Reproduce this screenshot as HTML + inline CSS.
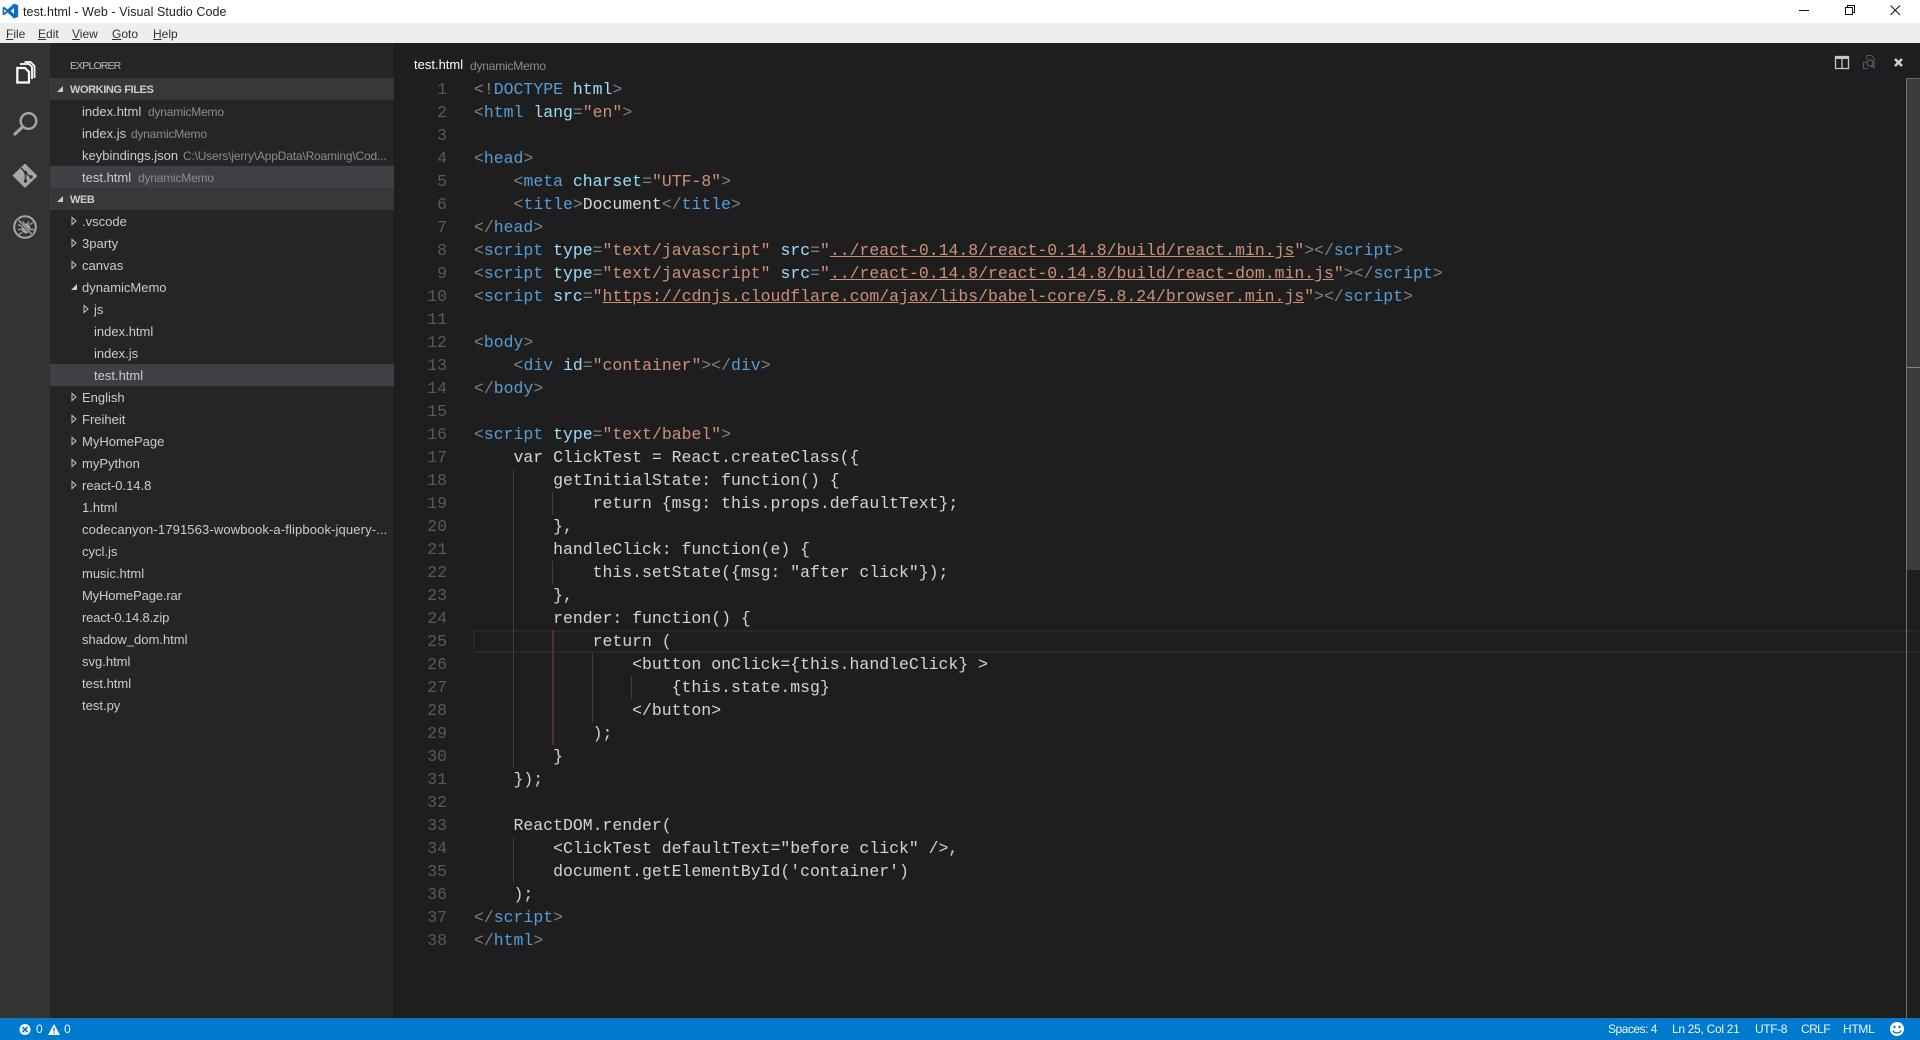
<!DOCTYPE html>
<html lang="en"><head><meta charset="utf-8"><title>test.html - Web - Visual Studio Code</title>
<style>
html,body{margin:0;padding:0;width:1920px;height:1040px;overflow:hidden;background:#1e1e1e;font-family:"Liberation Sans",sans-serif}
div,span,svg{box-sizing:border-box}
.a{position:absolute}
#title{left:0;top:0;width:1920px;height:23px;background:#fff}
#title .t{left:23px;top:1px;line-height:23px;font-size:12.5px;letter-spacing:.07px;color:#222;white-space:pre}
#menu{left:0;top:23px;width:1920px;height:20px;background:#eee;font-size:12px;color:#333;line-height:20px}
#menu span{position:absolute;top:1px}
#menu u{text-decoration:underline}
#act{left:0;top:43px;width:50px;height:975px;background:#333}
#side{left:50px;top:43px;width:344px;height:975px;background:#252526;color:#ccc;font-size:13px}
.r{position:absolute;left:50px;width:344px;height:22px;line-height:22px;font-size:13px;color:#ccc;white-space:pre}
.r span.n{position:absolute;top:1px}
.r span.d{position:absolute;top:1px;font-size:12px;letter-spacing:-.2px;color:#8c8c8c}
.h{background:#383838;font-weight:bold;font-size:11px;color:#ccc;letter-spacing:-.4px}
.s{background:#3f3f46}
.r svg{position:absolute;top:0;left:0}
#code{left:0;top:78px;width:1900px;font-family:"Liberation Mono",monospace;font-size:16.48px;line-height:23px;color:#d4d4d4}
.l{position:absolute;left:474px;height:23px;white-space:pre}
.g{position:absolute;width:1px;background:#404040}
.ln{position:absolute;left:400px;width:47px;text-align:right;color:#5a5a5a;height:23px;font-family:"Liberation Mono",monospace;font-size:16.5px;line-height:23px}
i{font-style:normal}
.p{color:#808080}.k{color:#569cd6}.b{color:#9cdcfe}.v{color:#ce9178}.u{color:#ce9178;text-decoration:underline}
#status{left:0;top:1018px;width:1920px;height:22px;background:#007acc;color:#fff;font-size:12px;line-height:22px}
#status span{position:absolute;top:0;white-space:pre;color:#eef6fb}
</style></head><body>
<div class="a" id="title">
<svg class="a" style="left:2px;top:3px" width="17" height="16" viewBox="0 0 17 16"><path fill="#0f6fbf" d="M12 0.5 5.6 6.4 2.2 3.7 0.6 4.5v7l1.6.8 3.4-2.7 6.4 5.9 4.2-1.8V2.3zM2.4 6l2 2-2 2zM12 5l-3.2 3 3.2 3z" fill-rule="evenodd"/></svg>
<div class="a t">test.html - Web - Visual Studio Code</div>
<svg class="a" style="left:1790px;top:0" width="130" height="23" viewBox="0 0 130 23" fill="none" stroke="#111" stroke-width="1"><path d="M9 10.5h10"/><path d="M55.500 7.500h7v7h-7zM57.500 7.500v-2.000h7v7h-2"/><path d="M100.500 5.500l9.500 9.500M110 5.500l-9.500 9.500"/></svg>
</div>
<div class="a" id="menu">
<span style="left:6px"><u>F</u>ile</span><span style="left:38px"><u>E</u>dit</span><span style="left:72px"><u>V</u>iew</span><span style="left:112px"><u>G</u>oto</span><span style="left:153px"><u>H</u>elp</span>
</div>
<div class="a" id="act">
<svg class="a" style="left:0;top:0" width="50" height="200" viewBox="0 0 50 200" fill="none">
<path d="M17.300 25h7.700l4 4v10.500H17.300z" stroke="#fff" stroke-width="2.200"/>
<path d="M21 22v-1h8l3 3v12" stroke="#fff" stroke-width="1.800"/>
<path d="M24.500 19h6l4 4v12" stroke="#fff" stroke-width="1.800"/>
<circle cx="28.500" cy="78" r="7.800" stroke="#a6a6a6" stroke-width="2.400"/>
<path d="M22.500 84l-7.500 7" stroke="#a6a6a6" stroke-width="3.200" stroke-linecap="round"/>
<path d="M25 121.500 36.500 133 25 144 13.500 132.500z" fill="#a6a6a6" stroke="#a6a6a6" stroke-linejoin="round" stroke-width="1.500"/>
<path d="M21 125l4.500 4.500v9M25.500 129.500l5 4.500" stroke="#333" stroke-width="1.500"/><circle cx="25.500" cy="129.500" r="1.700" fill="#333"/><circle cx="25.500" cy="138" r="1.700" fill="#333"/><circle cx="31" cy="134" r="1.700" fill="#333"/>
<circle cx="25" cy="184" r="10.800" stroke="#a6a6a6" stroke-width="2"/>
<ellipse cx="26" cy="185.500" rx="4.500" ry="5" fill="#a6a6a6"/><path d="M18 181.500l4 2M18 186.500h4M19 191.500l3-2M30 181.500l3-2M30 186.500h4M30 189.500l3 2M23 178.500l1.500 3M29 178.500l-1.500 3" stroke="#a6a6a6" stroke-width="1.300"/>
<path d="M17.500 176.500l15 15.500" stroke="#333" stroke-width="2.600"/>
<path d="M18 176.500l14.500 15.500" stroke="#a6a6a6" stroke-width="1.300"/>
</svg>
</div>
<div class="a" id="side"></div>
<div class="a" style="left:70px;top:55px;line-height:22px;font-size:10.5px;letter-spacing:-.85px;color:#bbb">EXPLORER</div>

<div class="r h" style="top:78px"><svg width="30" height="22"><path d="M7 14h6V8z" fill="#ccc"/></svg><span class="n" style="left:20px">WORKING FILES</span></div>
<div class="r" style="top:100px"><span class="n" style="left:32px">index.html</span><span class="d" style="left:98px">dynamicMemo</span></div>
<div class="r" style="top:122px"><span class="n" style="left:32px">index.js</span><span class="d" style="left:81px">dynamicMemo</span></div>
<div class="r" style="top:144px"><span class="n" style="left:32px">keybindings.json</span><span class="d" style="left:133px;letter-spacing:-.18px">C:\Users\jerry\AppData\Roaming\Cod...</span></div>
<div class="r s" style="top:166px"><span class="n" style="left:32px">test.html</span><span class="d" style="left:88px">dynamicMemo</span></div>
<div class="r h" style="top:188px"><svg width="30" height="22"><path d="M7 14h6V8z" fill="#ccc"/></svg><span class="n" style="left:20px">WEB</span></div>

<div class="r" style="top:210px"><svg width="60" height="22"><path d="M22 7.500v7l4-3.500z" fill="none" stroke="#c5c5c5"/></svg><span class="n" style="left:32px">.vscode</span></div>
<div class="r" style="top:232px"><svg width="60" height="22"><path d="M22 7.500v7l4-3.500z" fill="none" stroke="#c5c5c5"/></svg><span class="n" style="left:32px">3party</span></div>
<div class="r" style="top:254px"><svg width="60" height="22"><path d="M22 7.500v7l4-3.500z" fill="none" stroke="#c5c5c5"/></svg><span class="n" style="left:32px">canvas</span></div>
<div class="r" style="top:276px"><svg width="60" height="22"><path d="M21 14h6V8z" fill="#ccc"/></svg><span class="n" style="left:32px">dynamicMemo</span></div>
<div class="r" style="top:298px"><svg width="60" height="22"><path d="M34 7.500v7l4-3.500z" fill="none" stroke="#c5c5c5"/></svg><span class="n" style="left:44px">js</span></div>
<div class="r" style="top:320px"><span class="n" style="left:44px">index.html</span></div>
<div class="r" style="top:342px"><span class="n" style="left:44px">index.js</span></div>
<div class="r s" style="top:364px"><span class="n" style="left:44px">test.html</span></div>
<div class="r" style="top:386px"><svg width="60" height="22"><path d="M22 7.500v7l4-3.500z" fill="none" stroke="#c5c5c5"/></svg><span class="n" style="left:32px">English</span></div>
<div class="r" style="top:408px"><svg width="60" height="22"><path d="M22 7.500v7l4-3.500z" fill="none" stroke="#c5c5c5"/></svg><span class="n" style="left:32px">Freiheit</span></div>
<div class="r" style="top:430px"><svg width="60" height="22"><path d="M22 7.500v7l4-3.500z" fill="none" stroke="#c5c5c5"/></svg><span class="n" style="left:32px">MyHomePage</span></div>
<div class="r" style="top:452px"><svg width="60" height="22"><path d="M22 7.500v7l4-3.500z" fill="none" stroke="#c5c5c5"/></svg><span class="n" style="left:32px">myPython</span></div>
<div class="r" style="top:474px"><svg width="60" height="22"><path d="M22 7.500v7l4-3.500z" fill="none" stroke="#c5c5c5"/></svg><span class="n" style="left:32px">react-0.14.8</span></div>
<div class="r" style="top:496px"><span class="n" style="left:32px">1.html</span></div>
<div class="r" style="top:518px"><span class="n" style="left:32px;letter-spacing:.13px">codecanyon-1791563-wowbook-a-flipbook-jquery-...</span></div>
<div class="r" style="top:540px"><span class="n" style="left:32px">cycl.js</span></div>
<div class="r" style="top:562px"><span class="n" style="left:32px">music.html</span></div>
<div class="r" style="top:584px"><span class="n" style="left:32px;letter-spacing:-.15px">MyHomePage.rar</span></div>
<div class="r" style="top:606px"><span class="n" style="left:32px;letter-spacing:-.15px">react-0.14.8.zip</span></div>
<div class="r" style="top:628px"><span class="n" style="left:32px">shadow_dom.html</span></div>
<div class="r" style="top:650px"><span class="n" style="left:32px">svg.html</span></div>
<div class="r" style="top:672px"><span class="n" style="left:32px">test.html</span></div>
<div class="r" style="top:694px"><span class="n" style="left:32px">test.py</span></div>

<div class="a" style="left:414px;top:54px;line-height:22px;font-size:13px;color:#fff;white-space:pre">test.html</div>
<div class="a" style="left:470px;top:55px;line-height:22px;font-size:12px;letter-spacing:-.2px;color:#8c8c8c;white-space:pre">dynamicMemo</div>
<svg class="a" style="left:1830px;top:50px" width="85" height="25" viewBox="0 0 85 25" fill="none">
<path d="M5.500 6.500h13v12h-13zM12 6.500v12" stroke="#c5c5c5" stroke-width="1.300"/><path d="M5 6h14v3H5z" fill="#c5c5c5"/>
<path d="M36.500 9.500v-4h5l2.500 2.500v9h-3M38 18.500h-4.500v-6h3" stroke="#5a5a5a"/><circle cx="40" cy="13" r="3" stroke="#2f5a80" stroke-width="1.400"/><path d="M42 15.500l3 3" stroke="#2f5a80" stroke-width="1.500"/>
<path d="M65 9l7 7M72 9l-7 7" stroke="#d0d0d0" stroke-width="2.600"/>
</svg>

<!-- cursor line -->
<div class="a" style="left:473px;top:630px;width:1445px;height:23px;border:2px solid #282828;border-right:none"></div>

<!-- indent guides -->
<div class="g" style="left:513px;top:469px;height:299px"></div>
<div class="g" style="left:552px;top:492px;height:23px"></div>
<div class="g" style="left:552px;top:561px;height:23px"></div>
<div class="g" style="left:552px;top:630px;height:115px;background:#5a2e2e;width:2px"></div>
<div class="g" style="left:592px;top:653px;height:69px"></div>
<div class="g" style="left:631px;top:676px;height:23px"></div>
<div class="g" style="left:513px;top:837px;height:46px"></div>

<div class="a" id="code" style="height:880px">
<div class="ln" style="top:0">1</div><div class="ln" style="top:23px">2</div><div class="ln" style="top:46px">3</div><div class="ln" style="top:69px">4</div><div class="ln" style="top:92px">5</div><div class="ln" style="top:115px">6</div><div class="ln" style="top:138px">7</div><div class="ln" style="top:161px">8</div><div class="ln" style="top:184px">9</div><div class="ln" style="top:207px">10</div><div class="ln" style="top:230px">11</div><div class="ln" style="top:253px">12</div><div class="ln" style="top:276px">13</div><div class="ln" style="top:299px">14</div><div class="ln" style="top:322px">15</div><div class="ln" style="top:345px">16</div><div class="ln" style="top:368px">17</div><div class="ln" style="top:391px">18</div><div class="ln" style="top:414px">19</div><div class="ln" style="top:437px">20</div><div class="ln" style="top:460px">21</div><div class="ln" style="top:483px">22</div><div class="ln" style="top:506px">23</div><div class="ln" style="top:529px">24</div><div class="ln" style="top:552px">25</div><div class="ln" style="top:575px">26</div><div class="ln" style="top:598px">27</div><div class="ln" style="top:621px">28</div><div class="ln" style="top:644px">29</div><div class="ln" style="top:667px">30</div><div class="ln" style="top:690px">31</div><div class="ln" style="top:713px">32</div><div class="ln" style="top:736px">33</div><div class="ln" style="top:759px">34</div><div class="ln" style="top:782px">35</div><div class="ln" style="top:805px">36</div><div class="ln" style="top:828px">37</div><div class="ln" style="top:851px">38</div>
<div class="l" style="top:0"><i class="p">&lt;!</i><i class="k">DOCTYPE</i> <i class="b">html</i><i class="p">&gt;</i></div>
<div class="l" style="top:23px"><i class="p">&lt;</i><i class="k">html</i> <i class="b">lang</i><i class="p">=</i><i class="v">"en"</i><i class="p">&gt;</i></div>
<div class="l" style="top:69px"><i class="p">&lt;</i><i class="k">head</i><i class="p">&gt;</i></div>
<div class="l" style="top:92px">    <i class="p">&lt;</i><i class="k">meta</i> <i class="b">charset</i><i class="p">=</i><i class="v">"UTF-8"</i><i class="p">&gt;</i></div>
<div class="l" style="top:115px">    <i class="p">&lt;</i><i class="k">title</i><i class="p">&gt;</i>Document<i class="p">&lt;/</i><i class="k">title</i><i class="p">&gt;</i></div>
<div class="l" style="top:138px"><i class="p">&lt;/</i><i class="k">head</i><i class="p">&gt;</i></div>
<div class="l" style="top:161px"><i class="p">&lt;</i><i class="k">script</i> <i class="b">type</i><i class="p">=</i><i class="v">"text/javascript"</i> <i class="b">src</i><i class="p">=</i><i class="v">"</i><i class="u">../react-0.14.8/react-0.14.8/build/react.min.js</i><i class="v">"</i><i class="p">&gt;&lt;/</i><i class="k">script</i><i class="p">&gt;</i></div>
<div class="l" style="top:184px"><i class="p">&lt;</i><i class="k">script</i> <i class="b">type</i><i class="p">=</i><i class="v">"text/javascript"</i> <i class="b">src</i><i class="p">=</i><i class="v">"</i><i class="u">../react-0.14.8/react-0.14.8/build/react-dom.min.js</i><i class="v">"</i><i class="p">&gt;&lt;/</i><i class="k">script</i><i class="p">&gt;</i></div>
<div class="l" style="top:207px"><i class="p">&lt;</i><i class="k">script</i> <i class="b">src</i><i class="p">=</i><i class="v">"</i><i class="u">https://cdnjs.cloudflare.com/ajax/libs/babel-core/5.8.24/browser.min.js</i><i class="v">"</i><i class="p">&gt;&lt;/</i><i class="k">script</i><i class="p">&gt;</i></div>
<div class="l" style="top:253px"><i class="p">&lt;</i><i class="k">body</i><i class="p">&gt;</i></div>
<div class="l" style="top:276px">    <i class="p">&lt;</i><i class="k">div</i> <i class="b">id</i><i class="p">=</i><i class="v">"container"</i><i class="p">&gt;&lt;/</i><i class="k">div</i><i class="p">&gt;</i></div>
<div class="l" style="top:299px"><i class="p">&lt;/</i><i class="k">body</i><i class="p">&gt;</i></div>
<div class="l" style="top:345px"><i class="p">&lt;</i><i class="k">script</i> <i class="b">type</i><i class="p">=</i><i class="v">"text/babel"</i><i class="p">&gt;</i></div>
<div class="l" style="top:368px">    var ClickTest = React.createClass({</div>
<div class="l" style="top:391px">        getInitialState: function() {</div>
<div class="l" style="top:414px">            return {msg: this.props.defaultText};</div>
<div class="l" style="top:437px">        },</div>
<div class="l" style="top:460px">        handleClick: function(e) {</div>
<div class="l" style="top:483px">            this.setState({msg: "after click"});</div>
<div class="l" style="top:506px">        },</div>
<div class="l" style="top:529px">        render: function() {</div>
<div class="l" style="top:552px">            return (</div>
<div class="l" style="top:575px">                &lt;button onClick={this.handleClick} &gt;</div>
<div class="l" style="top:598px">                    {this.state.msg}</div>
<div class="l" style="top:621px">                &lt;/button&gt;</div>
<div class="l" style="top:644px">            );</div>
<div class="l" style="top:667px">        }</div>
<div class="l" style="top:690px">    });</div>
<div class="l" style="top:736px">    ReactDOM.render(</div>
<div class="l" style="top:759px">        &lt;ClickTest defaultText="before click" /&gt;,</div>
<div class="l" style="top:782px">        document.getElementById('container')</div>
<div class="l" style="top:805px">    );</div>
<div class="l" style="top:828px"><i class="p">&lt;/</i><i class="k">script</i><i class="p">&gt;</i></div>
<div class="l" style="top:851px"><i class="p">&lt;/</i><i class="k">html</i><i class="p">&gt;</i></div>
</div>

<!-- scrollbar -->
<div class="a" style="left:1906px;top:78px;width:14px;height:492px;background:#3c3c3c"></div>
<div class="a" style="left:1906px;top:367px;width:14px;height:1px;background:#858585"></div>
<div class="a" style="left:1906px;top:78px;width:14px;height:1px;background:#6a6a6a"></div>
<div class="a" style="left:1906px;top:78px;width:1px;height:940px;background:#717171"></div>

<div class="a" id="status">
<svg class="a" style="left:19px;top:5px" width="44" height="13" viewBox="0 0 44 13"><circle cx="6" cy="6.500" r="5.500" fill="#fff"/><path d="M3.500 4l5 5M8.500 4l-5 5" stroke="#007acc" stroke-width="1.600"/><path d="M35 1 41 12H29z" fill="#fff"/><path d="M35 4.500v4M35 9.500v1.500" stroke="#007acc" stroke-width="1.300"/></svg>
<span style="left:36px">0</span><span style="left:64px">0</span>
<span style="left:1608px;letter-spacing:-.5px">Spaces: 4</span>
<span style="left:1672px;letter-spacing:-.3px">Ln 25, Col 21</span>
<span style="left:1755px;letter-spacing:-.4px">UTF-8</span>
<span style="left:1801px;letter-spacing:-.6px">CRLF</span>
<span style="left:1843px;letter-spacing:-.3px">HTML</span>
<svg class="a" style="left:1889px;top:3px" width="16" height="16" viewBox="0 0 16 16"><circle cx="8" cy="8" r="7" fill="#fff"/><circle cx="5.500" cy="6" r="1.200" fill="#007acc"/><circle cx="10.500" cy="6" r="1.200" fill="#007acc"/><path d="M4 9.500c1 3.200 7 3.200 8 0" fill="none" stroke="#007acc" stroke-width="1.300"/></svg>
</div>
</body></html>
